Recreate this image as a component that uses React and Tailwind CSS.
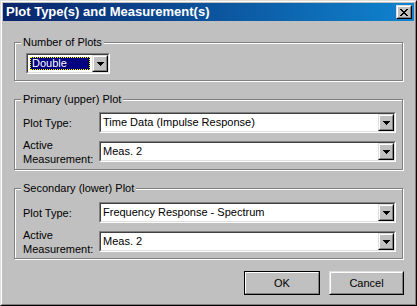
import React from 'react';

const CLOSE_ROWS = ['11000011', '01100110', '00111100', '00011000', '00111100', '01100110', '11000011'];

const CloseGlyph = () => (
    <svg width="8" height="7" viewBox="0 0 8 7" shapeRendering="crispEdges">
        {CLOSE_ROWS.map((row, y) =>
            row.split('').map((c, x) => (c === '1' ? <rect key={`${x}-${y}`} x={x} y={y} width="1" height="1" fill="#000" /> : null))
        )}
    </svg>
);

const ArrowGlyph = () => (
    <svg width="7" height="4" viewBox="0 0 7 4" shapeRendering="crispEdges">
        <rect x="0" y="0" width="7" height="1" fill="#000" />
        <rect x="1" y="1" width="5" height="1" fill="#000" />
        <rect x="2" y="2" width="3" height="1" fill="#000" />
        <rect x="3" y="3" width="1" height="1" fill="#000" />
    </svg>
);

// classic raised 3d edge
const Raised = ({ className, children }) => (
    <div className={`border border-t-[#dfdfdf] border-l-[#dfdfdf] border-r-black border-b-black bg-[#c0c0c0] ${className}`}>
        <div className="w-full h-full border border-t-white border-l-white border-r-[#808080] border-b-[#808080] flex items-center justify-center">
            {children}
        </div>
    </div>
);

const Combo = ({ value, focused, className }) => (
    <div className={`h-[21px] border border-t-[#808080] border-l-[#808080] border-r-white border-b-white ${className}`}>
        <div className="h-full flex border border-t-[#404040] border-l-[#404040] border-r-[#dfdfdf] border-b-[#dfdfdf] bg-white">
            {focused ? (
                <div className="flex-1 p-[2px]">
                    <div className="h-full border border-dotted border-[#ffff00] bg-black">
                        <div className="h-full bg-[#000080] text-white flex items-center pl-px">{value}</div>
                    </div>
                </div>
            ) : (
                <div className="flex-1 flex items-center pl-[2px] whitespace-nowrap overflow-hidden">{value}</div>
            )}
            <Raised className="w-[16px] h-full">
                <ArrowGlyph />
            </Raised>
        </div>
    </div>
);

// etched group box, caption sits over the top line
const Group = ({ title, className, children }) => (
    <div className={`relative border border-[#808080] shadow-[inset_1px_1px_0_#fff,1px_1px_0_#fff] ${className}`}>
        <span className="absolute left-[6px] -top-[7px] px-[2px] leading-[13px] bg-[#c0c0c0]">{title}</span>
        {children}
    </div>
);

const Row = ({ label, value }) => (
    <div className="flex items-center h-[21px]">
        <div className="w-[76px] leading-[14px]">{label}</div>
        <Combo value={value} className="w-[297px]" />
    </div>
);

const App = () => {
    return (
        <div className="w-[417px] h-[306px] border border-t-[#dfdfdf] border-l-[#dfdfdf] border-r-black border-b-black font-['Liberation_Sans',Arial,sans-serif] text-[11px] text-black">
            <div className="h-full flex flex-col p-px bg-[#c0c0c0] border border-t-white border-l-white border-r-[#808080] border-b-[#808080]">
                <div className="h-[18px] flex items-center pl-[3px] pr-[2px] bg-linear-to-r from-[#0a246a] to-[#1084d0]">
                    <span className="flex-1 text-white font-bold text-[13px]">Plot Type(s) and Measurement(s)</span>
                    <Raised className="w-[16px] h-[14px]">
                        <CloseGlyph />
                    </Raised>
                </div>

                <div className="flex-1 flex flex-col px-[11px] pt-[21px]">
                    <Group title="Number of Plots">
                        <div className="pt-[10px] pb-[6px] pl-[11px]">
                            <Combo value="Double" focused className="w-[84px]" />
                        </div>
                    </Group>

                    <Group title="Primary (upper) Plot" className="mt-[18px]">
                        <div className="flex flex-col gap-[8px] pt-[12px] pb-[7px] pl-[8px]">
                            <Row label="Plot Type:" value="Time Data (Impulse Response)" />
                            <Row label={<>Active<br />Measurement:</>} value="Meas. 2" />
                        </div>
                    </Group>

                    <Group title="Secondary (lower) Plot" className="mt-[18px]">
                        <div className="flex flex-col gap-[8px] pt-[13px] pb-[6px] pl-[8px]">
                            <Row label="Plot Type:" value="Frequency Response - Spectrum" />
                            <Row label={<>Active<br />Measurement:</>} value="Meas. 2" />
                        </div>
                    </Group>

                    <div className="flex justify-end gap-[9px] mt-[12px] -mr-px">
                        <div className="w-[76px] h-[24px] border border-black">
                            <div className="h-full flex items-center justify-center border border-t-white border-l-white border-r-[#808080] border-b-[#808080]">OK</div>
                        </div>
                        <Raised className="w-[75px] h-[24px]">Cancel</Raised>
                    </div>
                </div>
            </div>
        </div>
    );
};

export default App;
